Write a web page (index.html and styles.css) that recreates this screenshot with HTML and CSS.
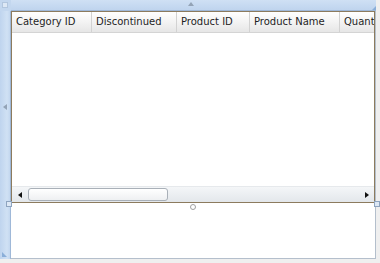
FILE: index.html
```html
<!DOCTYPE html>
<html lang="en">
<head>
    <meta charset="UTF-8">
    <title>DataGrid designer</title>
    <link rel="stylesheet" href="styles.css">
</head>
<body>

    <div class="designer">
        <div class="corner"><span class="handle"></span></div>
        <div class="ruler-top"><span class="arrow-up"></span><span class="notch-top"></span></div>
        <div class="ruler-left"><span class="arrow-left"></span><span class="notch-bottom"></span></div>

        <div class="canvas">
            <div class="datagrid">
                <div class="header">
                    <div class="col">Category ID</div>
                    <div class="col">Discontinued</div>
                    <div class="col">Product ID</div>
                    <div class="col">Product Name</div>
                    <div class="col last">Quantity</div>
                </div>
                <div class="rows"></div>
                <div class="hscroll">
                    <div class="arrow-btn"><span class="tri-left"></span></div>
                    <div class="track">
                        <div class="thumb"></div>
                    </div>
                    <div class="arrow-btn"><span class="tri-right"></span></div>
                </div>
            </div>
            <div class="below"></div>
        </div>

        <!-- resize handles of the selected grid -->
        <span class="handle handle-bl"></span>
        <span class="handle handle-br"></span>
        <span class="adorner"></span>
    </div>

</body>
</html>
```

FILE: styles.css
```css
body {
    margin: 0;
    padding: 0;
    background-color: #efefef;
    font-family: "DejaVu Sans", Verdana, sans-serif;
}
.designer {
    position: relative;
    width: 380px;
    height: 263px;
    display: grid;
    grid-template-columns: 11px 365px;
    grid-template-rows: 11px 248px;
}
.corner {
    background: #c3d7ef;
    position: relative;
}
.ruler-top {
    background: linear-gradient(#cfe0f4, #bfd4ee);
    border-bottom: 1px solid #9fb8d8;
    position: relative;
}
.ruler-left {
    background: linear-gradient(90deg, #bfd4ee, #d0e1f4 70%, #c3d7ef);
    border-right: 1px solid #9fb8d8;
    position: relative;
}
.arrow-up {
    position: absolute;
    left: 177px;
    top: 2px;
    border-left: 3px solid transparent;
    border-right: 3px solid transparent;
    border-bottom: 4px solid #93a3b6;
}
.arrow-left {
    position: absolute;
    left: 3px;
    top: 93px;
    border-top: 3px solid transparent;
    border-bottom: 3px solid transparent;
    border-right: 4px solid #93a3b6;
}
.notch-top {
    position: absolute;
    right: 0;
    bottom: 0;
    border-left: 4px solid transparent;
    border-bottom: 4px solid #8aaed8;
}
.notch-bottom {
    position: absolute;
    left: 2px;
    bottom: 2px;
    border-right: 5px solid transparent;
    border-bottom: 5px solid #8aaed8;
}
.canvas {
    background: white;
    border-right: 1px solid #b4bfcc;
    border-bottom: 1px solid #b4bfcc;
    display: flex;
    flex-direction: column;
}
.datagrid {
    width: 362px;
    height: 190px;
    border: 1px solid #8c7b5e;
    display: flex;
    flex-direction: column;
    overflow: hidden;
}
.header {
    display: grid;
    grid-template-columns: 80px 85px 73px 90px 1fr;
    height: 20px;
    background: linear-gradient(#ffffff, #f3f3f3 50%, #e6e6e6);
    border-bottom: 1px solid #d4d4d4;
    flex-shrink: 0;
}
.col {
    font-size: 10px;
    line-height: 20px;
    color: #1e1e1e;
    padding-left: 4px;
    border-right: 1px solid #d2d2d2;
    white-space: nowrap;
    overflow: hidden;
}
.col.last {
    border-right: none;
}
.rows {
    flex: 1;
    background: white;
}
.hscroll {
    height: 15px;
    display: flex;
    background: linear-gradient(#f4f6f8, #e3e7eb);
    border-top: 1px solid #e6e9ec;
    flex-shrink: 0;
}
.arrow-btn {
    width: 15px;
    display: flex;
    align-items: center;
    justify-content: center;
}
.tri-left {
    border-top: 3px solid transparent;
    border-bottom: 3px solid transparent;
    border-right: 4px solid #111;
}
.tri-right {
    border-top: 3px solid transparent;
    border-bottom: 3px solid transparent;
    border-left: 4px solid #111;
}
.track {
    flex: 1;
    padding: 1px 0 1px 1px;
}
.thumb {
    width: 138px;
    height: 11px;
    border: 1px solid #a9b0b8;
    border-radius: 3px;
    background: linear-gradient(#ffffff, #eef0f2);
}
.below {
    flex: 1;
}
.handle {
    position: absolute;
    width: 4px;
    height: 4px;
    border: 1px solid #8ea4bf;
    background: #dde8f5;
}
.corner .handle {
    left: 2px;
    top: 2px;
    border-color: #b2c6de;
}
.handle-bl {
    left: 6px;
    top: 201px;
}
.handle-br {
    left: 374px;
    top: 201px;
}
.adorner {
    position: absolute;
    left: 190px;
    top: 204px;
    width: 4px;
    height: 4px;
    border: 1px solid #a0a0a0;
    border-radius: 50%;
    background: white;
}
```
